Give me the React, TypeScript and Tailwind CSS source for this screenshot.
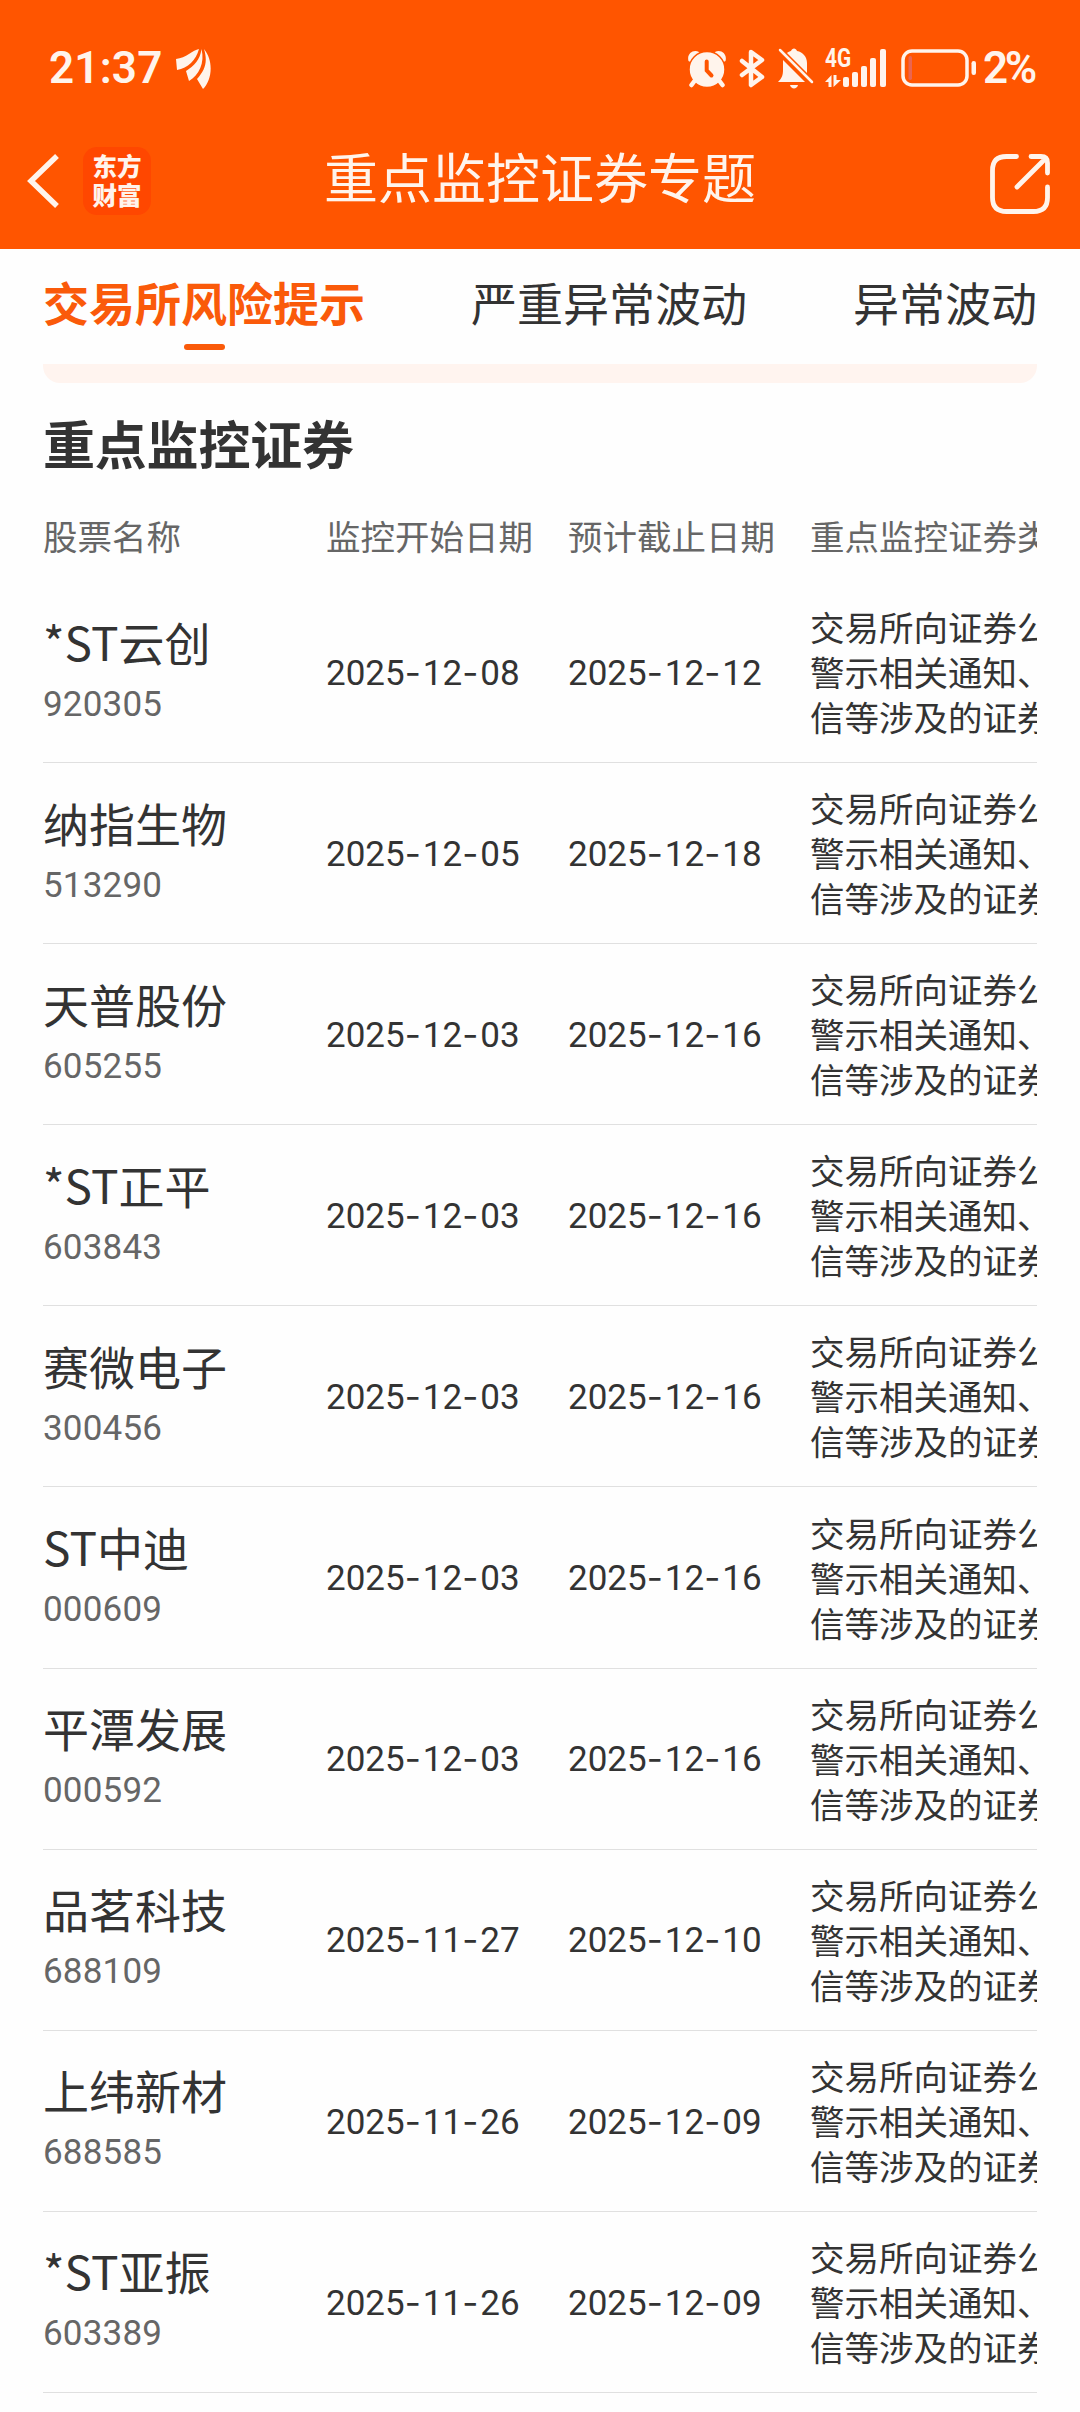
const stocks = [
  { name: '*ST云创', code: '920305', start: '2025-12-08', end: '2025-12-12' },
  { name: '纳指生物', code: '513290', start: '2025-12-05', end: '2025-12-18' },
  { name: '天普股份', code: '605255', start: '2025-12-03', end: '2025-12-16' },
  { name: '*ST正平', code: '603843', start: '2025-12-03', end: '2025-12-16' },
  { name: '赛微电子', code: '300456', start: '2025-12-03', end: '2025-12-16' },
  { name: 'ST中迪', code: '000609', start: '2025-12-03', end: '2025-12-16' },
  { name: '平潭发展', code: '000592', start: '2025-12-03', end: '2025-12-16' },
  { name: '品茗科技', code: '688109', start: '2025-11-27', end: '2025-12-10' },
  { name: '上纬新材', code: '688585', start: '2025-11-26', end: '2025-12-09' },
  { name: '*ST亚振', code: '603389', start: '2025-11-26', end: '2025-12-09' },
];

const reasonLines = ['交易所向证券公', '警示相关通知、', '信等涉及的证券'];

const tabs = ['交易所风险提示', '严重异常波动', '异常波动'];

function StatusBar() {
  return (
    <div className="flex h-[136px] items-center justify-between pl-[49px] pr-[43px] font-['Roboto',sans-serif] text-[#fff4ec]">
      <div className="flex items-center gap-[13px]">
        <span className="text-[44px] font-semibold leading-none tracking-[0.2px]">21:37</span>
        <svg className="h-[41px] w-[36px]" viewBox="0 0 36 41" fill="currentColor">
          <path d="M23 1C17 2 10 10 0 11L1 22C12 20 20 12 23 1Z" />
          <path d="M25.5 1C24 12 18 18 10 23L13 33C23 27 29 15 25.5 1Z" />
          <path d="M28 1C32 14 29 22 21 31L27 41C36 32 38 13 28 1Z" />
        </svg>
      </div>

      <div className="flex items-center">
        {/* Alarm */}
        <svg className="h-[39px] w-[38px]" viewBox="0 0 38 39" fill="none">
          <path d="M0.5 12C-1.5 5 5 0 11 3L14 8L6 15ZM37.5 12C39.5 5 33 0 27 3L24 8L32 15Z" fill="currentColor" />
          <circle cx="19" cy="20.5" r="18" fill="currentColor" stroke="#ff5500" strokeWidth="1.5" />
          <path d="M6.5 32L3.5 36M31.5 32L34.5 36" stroke="currentColor" strokeWidth="4.5" strokeLinecap="round" />
          <path d="M18.7 12.5V21.5L23.5 26.5" stroke="#ff5500" strokeWidth="4" strokeLinecap="round" />
        </svg>
        {/* Bluetooth */}
        <svg className="ml-[12px] h-[39px] w-[28px]" viewBox="0 0 28 39" fill="none">
          <path d="M4 12L24 28L13 36V3L24 11L4 26" stroke="currentColor" strokeWidth="4.5" strokeLinejoin="round" strokeLinecap="round" />
        </svg>
        {/* Muted bell */}
        <svg className="ml-[12px] h-[41px] w-[38px]" viewBox="0 0 38 41" fill="currentColor">
          <path d="M5 12L27 34H0C4 30 5 27 5 22Z" />
          <path d="M9 5C10 4 12 3 13 3C14 -0.5 18 -0.5 19 3C25 4 29 9 29 15V25Z" />
          <path d="M12 37H20C19 41.5 13 41.5 12 37Z" />
          <path d="M2 2L34 34" stroke="currentColor" strokeWidth="2.5" strokeLinecap="round" />
        </svg>
        <div className="ml-[9px] flex h-[38px] items-end">
          <div className="flex h-full w-[26px] flex-col justify-between">
            <span className="origin-left scale-x-80 text-[26px] font-bold leading-[18px]">4G</span>
            <svg className="h-[12px] w-[16px]" viewBox="0 0 16 12" fill="currentColor">
              <path d="M0 7L6.5 0V12H3.5V7ZM8.5 0H11.5V5H16L8.5 12Z" />
            </svg>
          </div>
          <svg className="-ml-[8px] h-[38px] w-[44px]" viewBox="0 0 44 38" fill="currentColor">
            <rect x="0" y="28" width="6" height="10" rx="2" />
            <rect x="9" y="23" width="6" height="15" rx="2" />
            <rect x="18" y="17" width="6" height="21" rx="2" />
            <rect x="27" y="9" width="6" height="29" rx="2" />
            <rect x="37" y="0" width="6" height="38" rx="2" />
          </svg>
        </div>
        {/* Battery */}
        <svg className="ml-[14px] h-[38px] w-[76px]" viewBox="0 0 76 38" fill="none">
          <rect x="2" y="2" width="64" height="34" rx="9" stroke="currentColor" strokeWidth="3.5" />
          <rect x="7.5" y="7" width="3.5" height="24" rx="1.7" fill="#ea6550" />
          <rect x="70.5" y="12" width="4.5" height="14" rx="2.2" fill="currentColor" />
        </svg>
        <span className="ml-[6px] w-[54px] text-[44px] font-semibold leading-none tracking-[-3.5px]">2%</span>
      </div>
    </div>
  );
}

function NavBar() {
  return (
    <div className="grid h-[113px] grid-cols-[1fr_auto_1fr] items-start pt-[11px] pl-[29px] pr-[29px]">
      <div className="-ml-[3px] flex items-center">
        <svg className="h-[56px] w-[34px]" viewBox="0 0 34 56" fill="none">
          <path d="M31 3L5 28L31 53" stroke="#fff4ec" strokeWidth="5.5" />
        </svg>
        <div className="ml-[23px] flex h-[68px] w-[68px] flex-col items-center rounded-[14px] bg-[#ff4700] pt-[4px] text-[24.5px] font-black leading-[29px] text-[#fff4ec]">
          <span>东方</span>
          <span>财富</span>
        </div>
      </div>
      <h1 className="-mt-[2px] text-[54px] leading-[62px] text-[#fff4ec]">重点监控证券专题</h1>
      <svg className="mt-[6px] h-[62px] w-[62px] justify-self-end" viewBox="0 0 62 62" fill="none" stroke="#fff4ec" strokeWidth="4.8" strokeLinecap="round" strokeLinejoin="round">
        <path d="M27.5 3.5H17.5C8 3.5 3.5 8 3.5 17.5V44.5C3.5 54 8 58.5 17.5 58.5H44.5C54 58.5 58.5 54 58.5 44.5V34" />
        <path d="M42 3.5H52C57 3.5 58.5 5 58.5 10V20M56.5 5.5L28 34" />
      </svg>
    </div>
  );
}

function DateText({ value }: { value: string }) {
  const [y, m, d] = value.split('-');
  const dash = <span className="font-['Inter'] tracking-[2px]">-</span>;
  return (
    <span className="pt-[3px] font-['Roboto',sans-serif] text-[35px] text-[#333]">
      {y}{dash}{m}{dash}{d}
    </span>
  );
}

export default function App() {
  return (
    <div className="h-[2412px] w-[1080px] overflow-hidden bg-[#fefefe] font-['Noto_Sans_CJK_SC',sans-serif] text-[#333]">
      <header className="bg-[#ff5500]">
        <StatusBar />
        <NavBar />
      </header>

      <nav className="flex h-[115px] gap-[106px] px-[43px] pt-[22px]">
        {tabs.map((tab, i) => (
          <div key={tab} className="flex shrink-0 flex-col items-center">
            <span className={i === 0 ? 'text-[46px] font-bold leading-[60px] text-[#fa5a0a]' : 'text-[46px] leading-[60px]'}>
              {tab}
            </span>
            {i === 0 && <span className="mt-[13px] h-[6px] w-[41px] rounded-full bg-[#fa5a0a]" />}
          </div>
        ))}
      </nav>

      <main className="mx-[43px] overflow-hidden">
        <div className="h-[19px] rounded-b-[17px] bg-[#fff4ef]" />
        <h2 className="mt-[25px] text-[52px] font-bold leading-[70px] tracking-[-0.2px]">重点监控证券</h2>

        <div className="mt-[34px] grid h-[70px] grid-cols-[283px_242px_242px_1fr] whitespace-nowrap text-[34.5px] leading-[46px] text-[#666]">
          <span>股票名称</span>
          <span>监控开始日期</span>
          <span>预计截止日期</span>
          <span className="w-[228px] overflow-hidden">重点监控证券类</span>
        </div>

        {stocks.map((stock) => (
          <div key={stock.code} className="grid h-[181.1px] grid-cols-[283px_242px_242px_1fr] items-center border-b border-[#e0e0e0] pb-px">
            <div className="flex flex-col">
              <span className="text-[46px] leading-[60px]">{stock.name}</span>
              <span className="pt-[6px] font-['Roboto',sans-serif] text-[35px] leading-[56px] tracking-[0.2px] text-[#666]">{stock.code}</span>
            </div>
            <DateText value={stock.start} />
            <DateText value={stock.end} />
            <div className="w-[228px] overflow-hidden whitespace-nowrap text-[34.5px] leading-[45px]">
              {reasonLines.map((line) => (
                <p key={line}>{line}</p>
              ))}
            </div>
          </div>
        ))}
      </main>
    </div>
  );
}
